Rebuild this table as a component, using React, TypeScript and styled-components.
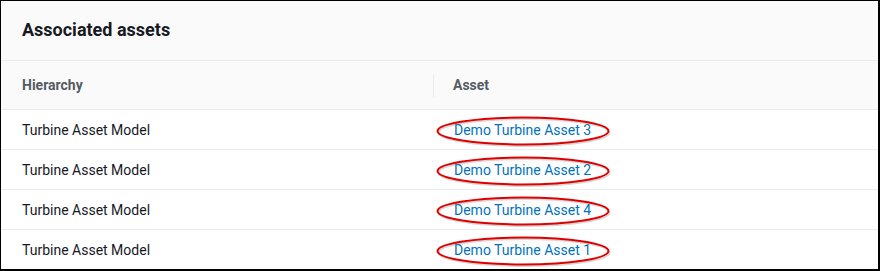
import React from "react";
import styled, { createGlobalStyle } from "styled-components";

const Global = createGlobalStyle`
  html, body { margin: 0; padding: 0; background: #ffffff; }
  body { font-family: Roboto, "Liberation Sans", Arial, sans-serif; }
`;

const Frame = styled.div`
  box-sizing: border-box;
  width: 880px;
  height: 271px;
  border-style: solid;
  border-color: #000;
  border-width: 1px 2px 2px 1px;
  background: #fff;
  overflow: hidden;
  display: flex;
  flex-direction: column;
`;

const Header = styled.div`
  height: 59px;
  flex: none;
  background: #fafafa;
  border-bottom: 1px solid #eaeded;
  display: flex;
  align-items: center;
  padding-left: 21px;
  box-sizing: content-box;
`;

const Title = styled.h2`
  margin: 0;
  font-size: 18px;
  font-weight: 700;
  color: #16191f;
  position: relative;
  top: -1px;
`;

const Grid = styled.div`
  display: grid;
  grid-template-columns: 432px 1fr;
`;

const HeadCell = styled.div<{ $divider?: boolean }>`
  height: 48px;
  background: #fafafa;
  border-bottom: 1px solid #eaeded;
  display: flex;
  align-items: center;
  padding-left: ${(p) => (p.$divider ? "20px" : "21px")};
  font-size: 14px;
  font-weight: 700;
  color: #545b64;
  position: relative;
  &::before {
    content: "";
    display: ${(p) => (p.$divider ? "block" : "none")};
    position: absolute;
    left: 0;
    top: 13px;
    height: 23px;
    width: 1px;
    background: #eaeded;
  }
`;

const Cell = styled.div<{ $last?: boolean }>`
  height: 39px;
  border-bottom: ${(p) => (p.$last ? "none" : "1px solid #eaeded")};
  display: flex;
  align-items: center;
  padding-left: 21px;
  font-size: 14px;
  color: #16191f;
`;

const Marked = styled.span`
  position: relative;
  display: inline-block;
`;

const AssetLink = styled.a`
  color: #0073bb;
  text-decoration: none;
  font-size: 14px;
`;

const Ellipse = styled.svg`
  position: absolute;
  left: -17px;
  top: -6px;
  width: 176px;
  height: 32px;
  overflow: visible;
  pointer-events: none;
`;

const rows = [3, 2, 4, 1];

export default function App() {
  return (
    <>
      <Global />
      <Frame>
        <Header>
          <Title>Associated assets</Title>
        </Header>
        <Grid>
          <HeadCell>Hierarchy</HeadCell>
          <HeadCell $divider>Asset</HeadCell>
          {rows.map((n, i) => (
            <React.Fragment key={n}>
              <Cell $last={i === rows.length - 1}>Turbine Asset Model</Cell>
              <Cell $last={i === rows.length - 1}>
                <Marked>
                  <AssetLink href="#">Demo Turbine Asset {n}</AssetLink>
                  <Ellipse viewBox="0 0 176 32">
                    <ellipse cx="87" cy="16.5" rx="85.5" ry="13.5" fill="none" stroke="rgba(120,120,120,0.3)" strokeWidth="2" />
                    <ellipse cx="86" cy="15" rx="85.5" ry="13.5" fill="none" stroke="#e00000" strokeWidth="2" />
                  </Ellipse>
                </Marked>
              </Cell>
            </React.Fragment>
          ))}
        </Grid>
      </Frame>
    </>
  );
}
